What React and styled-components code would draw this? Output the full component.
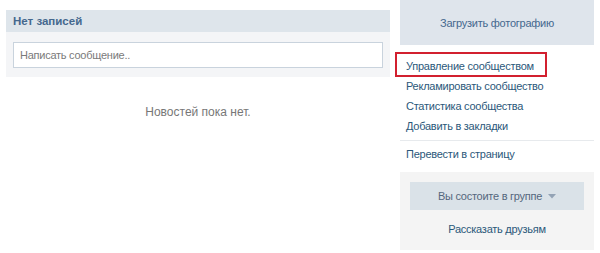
import React from "react";
import styled, { createGlobalStyle } from "styled-components";

const Global = createGlobalStyle`
  html, body { margin: 0; padding: 0; background: #fff; }
  body { font-family: "Liberation Sans", Arial, sans-serif; font-size: 11px; letter-spacing: -0.25px; }
`;

const Page = styled.div`
  display: flex;
  align-items: flex-start;
  gap: 10px;
  padding: 0 6px;
  width: 600px;
  height: 253px;
  box-sizing: border-box;
  overflow: hidden;
`;

const Wall = styled.div`
  width: 384px;
  flex: none;
  margin-top: 10px;
`;

const WallHeader = styled.div`
  height: 22px;
  background: #dee5eb;
  color: #45688e;
  font-weight: bold;
  font-size: 11.5px;
  letter-spacing: 0;
  padding: 0 7px;
  display: flex;
  align-items: center;
`;

const PostBox = styled.div`
  background: #f4f5f7;
  padding: 10px 7px 9px 7px;
`;

const Input = styled.div`
  height: 24px;
  background: #fff;
  border: 1px solid #c9d3dd;
  color: #7a7a7a;
  display: flex;
  align-items: center;
  padding: 0 6px;
`;

const Empty = styled.div`
  text-align: center;
  color: #777;
  font-size: 12px;
  letter-spacing: 0;
  padding-top: 28px;
`;

const Side = styled.div`
  width: 194px;
  flex: none;
  display: flex;
  flex-direction: column;
`;

const Upload = styled.div`
  height: 45px;
  background: #dfe5ec;
  color: #45688e;
  display: flex;
  align-items: center;
  justify-content: center;
`;

const Menu = styled.div`
  display: flex;
  flex-direction: column;
  padding-top: 11px;
`;

const Link = styled.div`
  position: relative;
  height: 20px;
  line-height: 20px;
  color: #2b587a;
  padding-left: 6px;
  white-space: nowrap;
  ${p => p.$hl && `
    &::after {
      content: "";
      position: absolute;
      left: -5px;
      top: -4px;
      width: 152px;
      height: 25px;
      border: 2px solid #d2202f;
      box-sizing: border-box;
    }
  `}
`;

const Sep = styled.div`
  height: 1px;
  background: #e7eaed;
  margin: 4px 0 3px;
`;

const Membership = styled.div`
  margin-top: 8px;
  background: #f4f4f4;
  padding: 10px 10px 0 10px;
  height: 78px;
  box-sizing: border-box;
`;

const Button = styled.div`
  height: 28px;
  background: #dae2e8;
  color: #55677d;
  display: flex;
  align-items: center;
  justify-content: center;
  gap: 6px;
`;

const Tell = styled.div`
  text-align: center;
  color: #2b587a;
  padding-top: 13px;
`;

const Arrow = () => (
  <svg width="8" height="5" viewBox="0 0 8 5"><path d="M0 0h8L4 4.5z" fill="#93a3b5" /></svg>
);

export default function App() {
  return (
    <>
      <Global />
      <Page>
        <Wall>
          <WallHeader>Нет записей</WallHeader>
          <PostBox>
            <Input>Написать сообщение..</Input>
          </PostBox>
          <Empty>Новостей пока нет.</Empty>
        </Wall>
        <Side>
          <Upload>Загрузить фотографию</Upload>
          <Menu>
            <Link $hl>Управление сообществом</Link>
            <Link>Рекламировать сообщество</Link>
            <Link>Статистика сообщества</Link>
            <Link>Добавить в закладки</Link>
            <Sep />
            <Link>Перевести в страницу</Link>
          </Menu>
          <Membership>
            <Button>Вы состоите в группе <Arrow /></Button>
            <Tell>Рассказать друзьям</Tell>
          </Membership>
        </Side>
      </Page>
    </>
  );
}
